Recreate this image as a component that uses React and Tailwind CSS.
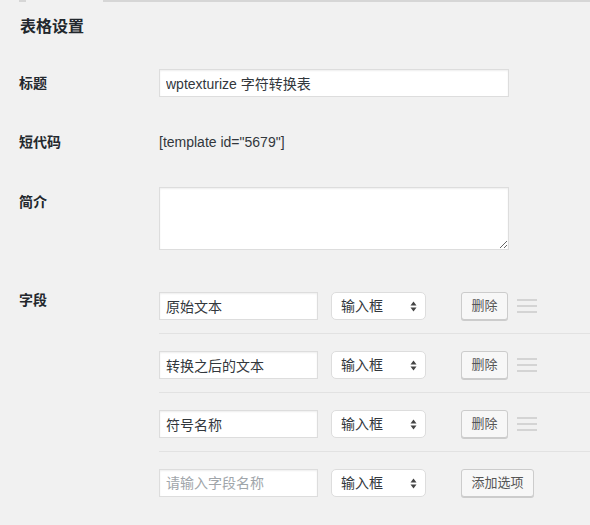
import React from 'react'

const rows = [
  { value: '原始文本', del: true },
  { value: '转换之后的文本', del: true },
  { value: '符号名称', del: true },
  { value: '', del: false },
]

function FakeSelect() {
  return (
    <div className="ml-[13px] flex h-[28px] w-[95px] items-center justify-between rounded-[5px] border border-[#dddddd] bg-white pl-[9px] pr-[8px] text-[14px] text-[#32373c]">
      <span>输入框</span>
      <svg width="7" height="11" viewBox="0 0 7 11" className="text-[#444]">
        <path d="M3.5 0.5 L6.5 4.5 H0.5 Z" fill="currentColor" />
        <path d="M3.5 10.5 L6.5 6.5 H0.5 Z" fill="currentColor" />
      </svg>
    </div>
  )
}

function Btn({ children, w }) {
  return (
    <button className={`ml-[35px] h-[28px] ${w} rounded-[3px] border border-[#cccccc] bg-[#f7f7f7] text-[13px] text-[#555] shadow-[0_1px_0_#cccccc]`}>
      {children}
    </button>
  )
}

function Handle() {
  return (
    <div className="ml-[9px] flex w-[20px] flex-col gap-[4px]">
      <div className="h-[2px] bg-[#d4d4d4]"></div>
      <div className="h-[2px] bg-[#d4d4d4]"></div>
      <div className="h-[2px] bg-[#d4d4d4]"></div>
    </div>
  )
}

export default function App() {
  return (
    <div className="min-h-[525px] bg-[#f1f1f1] text-[#23282d] [font-family:'Liberation_Sans','Noto_Sans_CJK_SC',sans-serif]">
      <div className="flex h-[2px]">
        <div className="ml-[19px] w-[7px] bg-[#d6d6d6]"></div>
        <div className="ml-[77px] flex-1 bg-[#d6d6d6]"></div>
      </div>
      <h2 className="pl-5 pt-[13px] text-[16px] font-bold leading-6">表格设置</h2>

      <div className="mt-[30px] flex items-center">
        <div className="w-[159px] pl-[19px] text-[14px] font-bold">标题</div>
        <input
          className="h-[28px] w-[350px] border border-[#dddddd] bg-white px-[6px] text-[14px] text-[#32373c] shadow-[inset_0_1px_2px_rgba(0,0,0,0.07)] outline-none"
          defaultValue="wptexturize 字符转换表"
        />
      </div>

      <div className="mt-[35px] flex h-[20px] items-center">
        <div className="w-[159px] pl-[19px] text-[14px] font-bold">短代码</div>
        <div className="text-[14px] text-[#32373c]">[template id="5679"]</div>
      </div>

      <div className="mt-[35px] flex items-start">
        <div className="w-[159px] pl-[19px] pt-[5px] text-[14px] font-bold leading-5">简介</div>
        <textarea className="h-[63px] w-[350px] border border-[#dddddd] bg-white shadow-[inset_0_1px_2px_rgba(0,0,0,0.07)] outline-none"></textarea>
      </div>

      <div className="mt-[42px] flex items-start">
        <div className="w-[159px] pl-[19px] text-[14px] font-bold leading-4">字段</div>
        <div className="flex-1">
          {rows.map((r, i) => (
            <div
              key={i}
              className={`flex items-center ${i > 0 ? 'pt-[17px]' : ''} ${i < rows.length - 1 ? 'border-b border-[#e2e2e2] pb-[13px]' : ''}`}
            >
              <input
                className="h-[28px] w-[159px] border border-[#dddddd] bg-white px-[6px] text-[14px] text-[#32373c] shadow-[inset_0_1px_2px_rgba(0,0,0,0.07)] outline-none placeholder:text-[#a0a5aa]"
                defaultValue={r.value}
                placeholder="请输入字段名称"
              />
              <FakeSelect />
              {r.del ? (
                <>
                  <Btn w="w-[47px]">删除</Btn>
                  <Handle />
                </>
              ) : (
                <Btn w="w-[73px]">添加选项</Btn>
              )}
            </div>
          ))}
        </div>
      </div>
    </div>
  )
}
